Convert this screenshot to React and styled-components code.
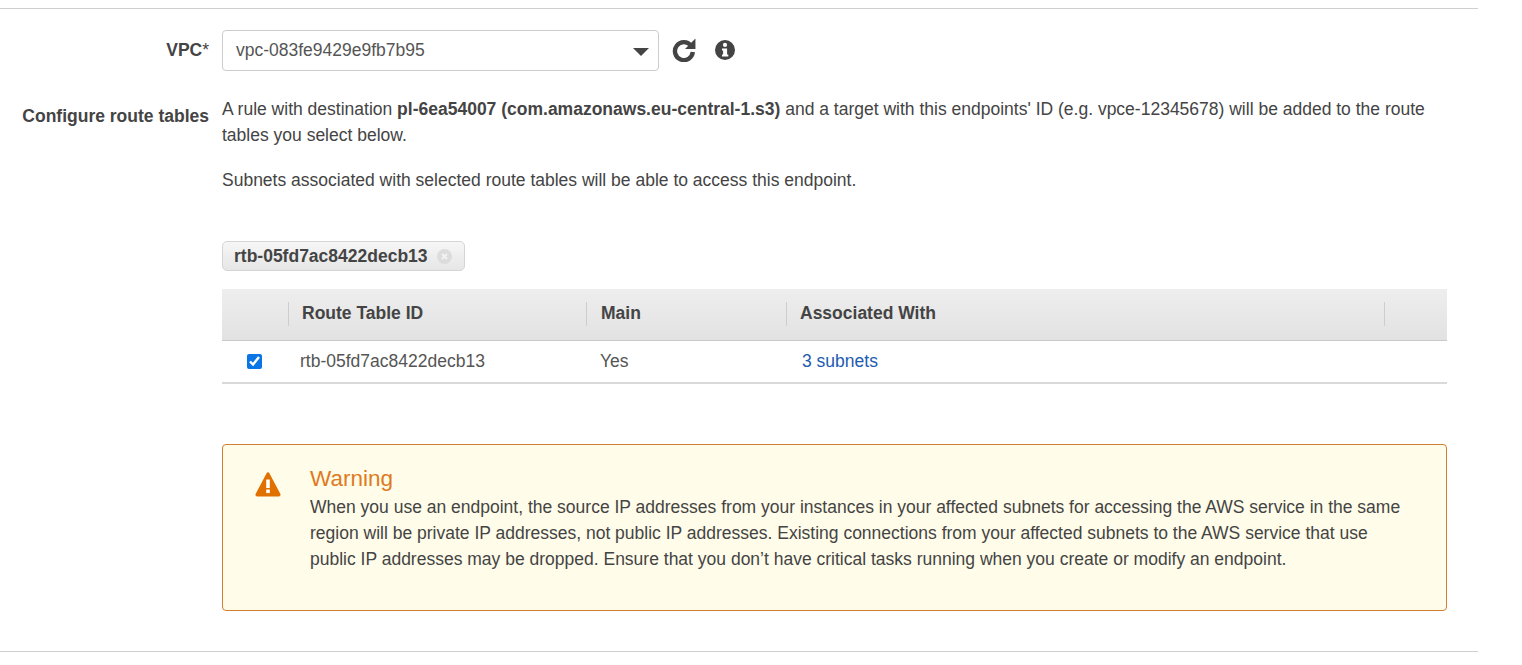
import React from "react";
import styled, { createGlobalStyle } from "styled-components";

const Global = createGlobalStyle`
  html, body { margin: 0; padding: 0; background: #fff; }
  body { font-family: "Liberation Sans", Arial, sans-serif; font-size: 16px; color: #444; }
`;
const Page = styled.div`
  width: 1478px;
  height: 665px;
  padding-top: 8px;
  box-sizing: border-box;
`;
const Rule = styled.hr`
  margin: 0;
  border: 0;
  height: 1px;
  background: #cfcfcf;
`;
const Row = styled.div`
  display: grid;
  grid-template-columns: 209px 1225px;
  column-gap: 13px;
  padding-top: ${p => p.$top}px;
`;
const Label = styled.div`
  text-align: right;
  font-weight: 700;
  font-size: 17.5px;
  line-height: 24px;
  padding-top: ${p => p.$top}px;
  white-space: nowrap;
`;
const Req = styled.span`font-weight: 400;`;
const VpcControls = styled.div`
  display: flex;
  align-items: center;
`;
const Select = styled.div`
  width: 437px;
  height: 41px;
  box-sizing: border-box;
  border: 1px solid #ccc;
  border-radius: 4px;
  padding: 0 9px 0 13px;
  display: flex;
  align-items: center;
  justify-content: space-between;
  font-size: 17.5px;
  color: #555;
`;
const Caret = styled.span`
  width: 0;
  height: 0;
  border-left: 8px solid transparent;
  border-right: 8px solid transparent;
  border-top: 8px solid #444;
  margin-top: 2px;
`;
const IconButton = styled.svg`
  display: block;
  margin: 0 0 2px ${p => p.$left}px;
  flex: none;
`;
const Para = styled.p`
  margin: ${p => p.$top || 0}px 0 0;
  font-size: 17.5px;
  line-height: 26px;
  color: #444;
`;
const Chip = styled.div`
  display: flex;
  width: 243px;
  align-items: center;
  height: 30px;
  box-sizing: border-box;
  margin-top: 48px;
  padding: 0 11px;
  border: 1px solid #d5d5d5;
  border-radius: 5px;
  background: linear-gradient(#f6f6f6, #e6e6e6);
  font-weight: 700;
  font-size: 17.5px;
  color: #444;
  gap: 9px;
  white-space: nowrap;
`;
const ChipClose = styled.svg`display: block; flex: none;`;
const Table = styled.div`
  margin-top: 18px;
  border-bottom: 2px solid #d9d9d9;
`;
const columns = "66px 298px 200px 598px 63px";
const Header = styled.div`
  display: grid;
  grid-template-columns: ${columns};
  height: 52px;
  box-sizing: border-box;
  padding-bottom: 2px;
  align-items: center;
  background: linear-gradient(#eeeeee, #e2e2e2);
  border-bottom: 1px solid #c9c9c9;
`;
const HeadCell = styled.div`
  height: 24px;
  line-height: 22px;
  box-sizing: border-box;
  padding-left: ${p => p.$left}px;
  border-left: ${p => (p.$sep ? "1px solid #cdcdcd" : "0")};
  font-weight: 700;
  font-size: 17.5px;
  color: #444;
`;
const BodyRow = styled.div`
  display: grid;
  grid-template-columns: ${columns};
  height: 41px;
  align-items: center;
  font-size: 17.5px;
  color: #555;
`;
const CheckCell = styled.div`
  display: flex;
  justify-content: center;
  padding-right: 2px;
`;
const Box = styled.input`
  width: 15px;
  height: 15px;
  margin: 0;
  accent-color: #0b75e6;
`;
const Cell = styled.div`padding-left: ${p => p.$left}px;`;
const SubnetLink = styled.a`
  color: #1d5cb0;
  text-decoration: none;
`;
const Warning = styled.div`
  margin-top: 60px;
  height: 167px;
  box-sizing: border-box;
  border: 1px solid #d08030;
  border-radius: 4px;
  background: #fffce9;
  display: flex;
  padding: 21px 35px 0 32px;
`;
const WarnIcon = styled.svg`
  display: block;
  flex: none;
  margin: 6px 29px 0 0;
`;
const WarnBody = styled.div`min-width: 0;`;
const WarnTitle = styled.div`
  color: #de7a22;
  font-size: 22.5px;
  line-height: 26px;
`;
const WarnText = styled.p`
  margin: 2px 0 0;
  font-size: 17.5px;
  line-height: 26px;
  color: #444;
`;
const FooterRule = styled(Rule)`margin-top: 40px;`;

export default function App() {
  return (
    <Page>
      <Global />
      <Rule />
      <Row $top={21}>
        <Label $top={8}>VPC<Req>*</Req></Label>
        <VpcControls>
          <Select>
            <span>vpc-083fe9429e9fb7b95</span>
            <Caret />
          </Select>
          <IconButton $left={13} width="25" height="25" viewBox="0 0 24 24" fill="none">
            <path d="M18.2 8.2A8.6 8.6 0 1 0 20 14.5" stroke="#444" strokeWidth="4.2" />
            <path d="M22.5 1.5V11.5H12.5Z" fill="#444" />
          </IconButton>
          <IconButton $left={18} width="20" height="20" viewBox="0 0 20 20">
            <circle cx="10" cy="10" r="10" fill="#444" />
            <circle cx="10" cy="4.9" r="2.1" fill="#fff" />
            <path d="M7 8.4h5.1v6h1.2v2.2H7v-2.2h1.1v-3.8H7Z" fill="#fff" />
          </IconButton>
        </VpcControls>
      </Row>
      <Row $top={25}>
        <Label $top={8}>Configure route tables</Label>
        <div>
          <Para>
            A rule with destination <b>pl-6ea54007 (com.amazonaws.eu-central-1.s3)</b> and a target with this endpoints' ID (e.g. vpce-12345678) will be added to the route tables you select below.
          </Para>
          <Para $top={19}>Subnets associated with selected route tables will be able to access this endpoint.</Para>
          <Chip>
            rtb-05fd7ac8422decb13
            <ChipClose width="15" height="15" viewBox="0 0 15 15">
              <circle cx="7.5" cy="7.5" r="7.5" fill="#dcdcdc" />
              <path d="M5 5l5 5M10 5l-5 5" stroke="#f2f2f2" strokeWidth="2" />
            </ChipClose>
          </Chip>
          <Table>
            <Header>
              <div />
              <HeadCell $sep $left={13}>Route Table ID</HeadCell>
              <HeadCell $sep $left={14}>Main</HeadCell>
              <HeadCell $sep $left={13}>Associated With</HeadCell>
              <HeadCell $sep />
            </Header>
            <BodyRow>
              <CheckCell><Box type="checkbox" defaultChecked /></CheckCell>
              <Cell $left={12}>rtb-05fd7ac8422decb13</Cell>
              <Cell $left={14}>Yes</Cell>
              <Cell $left={16}><SubnetLink href="#">3 subnets</SubnetLink></Cell>
              <div />
            </BodyRow>
          </Table>
          <Warning>
            <WarnIcon width="26" height="25" viewBox="0 0 26 25">
              <path d="M11.6 1.2a1.6 1.6 0 0 1 2.8 0L25.4 22a1.6 1.6 0 0 1-1.4 2.4H2a1.6 1.6 0 0 1-1.4-2.4Z" fill="#e07000" />
              <rect x="11.2" y="7.5" width="3.6" height="8.5" fill="#fff" />
              <rect x="11.2" y="17.5" width="3.6" height="3.6" fill="#fff" />
            </WarnIcon>
            <WarnBody>
              <WarnTitle>Warning</WarnTitle>
              <WarnText>
                When you use an endpoint, the source IP addresses from your instances in your affected subnets for accessing the AWS service in the same region will be private IP addresses, not public IP addresses. Existing connections from your affected subnets to the AWS service that use public IP addresses may be dropped. Ensure that you don’t have critical tasks running when you create or modify an endpoint.
              </WarnText>
            </WarnBody>
          </Warning>
        </div>
      </Row>
      <FooterRule />
    </Page>
  );
}
